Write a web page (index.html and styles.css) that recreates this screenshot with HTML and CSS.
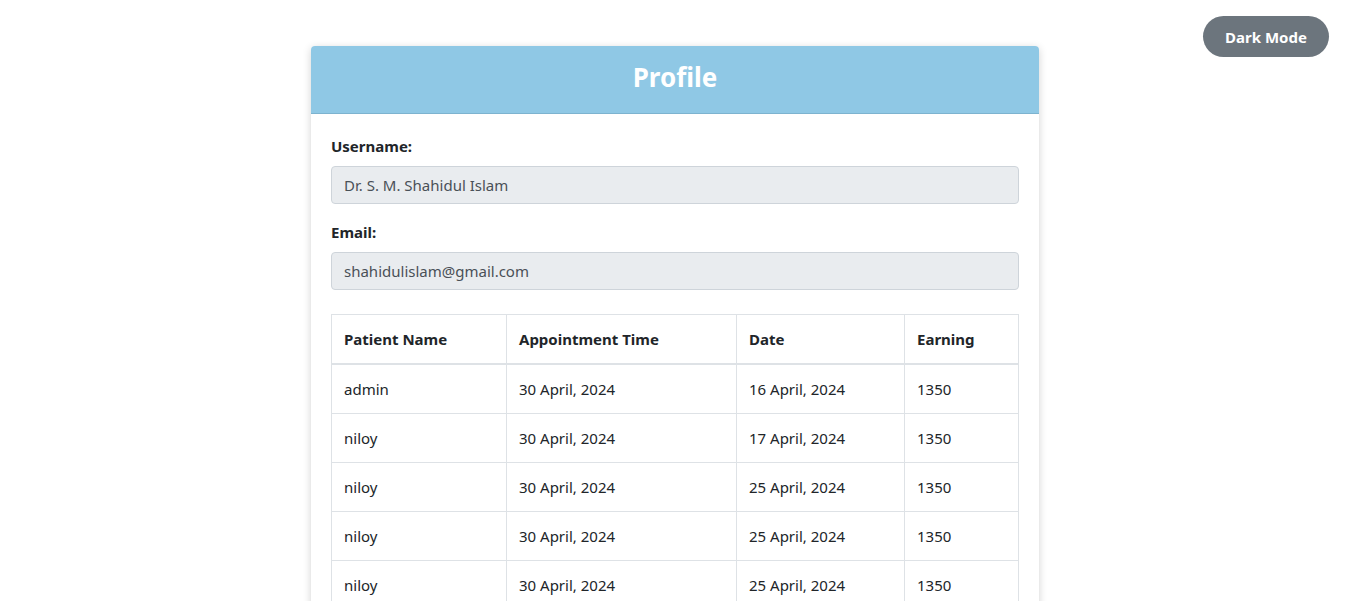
FILE: index.html
```html
<!DOCTYPE html>
<html lang="en">
<head>
<meta charset="utf-8">
<title>Profile</title>
<link rel="stylesheet" href="styles.css">
</head>
<body>
<div class="topbar">
  <button class="mode-btn" type="button">Dark Mode</button>
</div>
<main class="page">
  <section class="card">
    <header class="card-header">
      <h1 class="card-title">Profile</h1>
    </header>
    <div class="card-body">
      <div class="form-group">
        <label class="label" for="username">Username:</label>
        <input class="field" id="username" type="text" value="Dr. S. M. Shahidul Islam" readonly>
      </div>
      <div class="form-group">
        <label class="label" for="email">Email:</label>
        <input class="field" id="email" type="text" value="shahidulislam@gmail.com" readonly>
      </div>
      <table class="table">
        <colgroup>
          <col class="c1"><col class="c2"><col class="c3"><col class="c4">
        </colgroup>
        <thead>
          <tr><th>Patient Name</th><th>Appointment Time</th><th>Date</th><th>Earning</th></tr>
        </thead>
        <tbody>
          <tr><td>admin</td><td>30 April, 2024</td><td>16 April, 2024</td><td>1350</td></tr>
          <tr><td>niloy</td><td>30 April, 2024</td><td>17 April, 2024</td><td>1350</td></tr>
          <tr><td>niloy</td><td>30 April, 2024</td><td>25 April, 2024</td><td>1350</td></tr>
          <tr><td>niloy</td><td>30 April, 2024</td><td>25 April, 2024</td><td>1350</td></tr>
          <tr><td>niloy</td><td>30 April, 2024</td><td>25 April, 2024</td><td>1350</td></tr>
          <tr><td>niloy</td><td>30 April, 2024</td><td>25 April, 2024</td><td>1350</td></tr>
        </tbody>
      </table>
    </div>
  </section>
</main>
</body>
</html>
```

FILE: styles.css
```css
* { box-sizing: border-box; }
html, body { margin: 0; padding: 0; }
body {
  font-family: "Noto Sans", "Open Sans", sans-serif;
  font-size: 15px;
  line-height: 24px;
  color: #212529;
  background: #fff;
}
.topbar {
  display: flex;
  justify-content: flex-end;
  padding: 16px 19px 0 0;
  height: 46px;
}
.mode-btn {
  height: 41px;
  width: 126px;
  border: none;
  border-radius: 21px;
  background: #6c757d;
  color: #fff;
  font-family: inherit;
  font-size: 15px;
  font-weight: 700;
  padding: 0;
  cursor: pointer;
}
.page {
  display: flex;
  justify-content: center;
  padding-left: 2px;
}
.card {
  width: 728px;
  border-radius: 4px;
  background: #fff;
  box-shadow: 0 2px 8px rgba(0,0,0,0.18);
  overflow: hidden;
}
.card-header {
  background: #8fc8e5;
  border-bottom: 1px solid #7db3cf;
  height: 68px;
  padding-bottom: 6px;
  display: flex;
  align-items: center;
  justify-content: center;
}
.card-title {
  margin: 0;
  color: #fff;
  font-size: 26px;
  font-weight: 700;
  line-height: 32px;
}
.card-body {
  padding: 20px;
}
.form-group { margin-bottom: 16px; }
.label {
  display: block;
  font-weight: 700;
  margin-bottom: 8px;
  font-size: 15px;
}
.field {
  display: block;
  width: 100%;
  height: 38px;
  padding: 6px 12px;
  font-family: inherit;
  font-size: 15px;
  line-height: 24px;
  color: #495057;
  background: #e9ecef;
  border: 1px solid #ced4da;
  border-radius: 4px;
  outline: none;
}
.table {
  width: 100%;
  margin-top: 24px;
  border-collapse: collapse;
  table-layout: fixed;
}
.c1 { width: 175px; }
.c2 { width: 230px; }
.c3 { width: 168px; }
.c4 { width: auto; }
.table th, .table td {
  border: 1px solid #dee2e6;
  padding: 12px;
  text-align: left;
  vertical-align: top;
  font-size: 15px;
  line-height: 24px;
}
.table th {
  font-weight: 700;
  border-bottom-width: 2px;
}
```
